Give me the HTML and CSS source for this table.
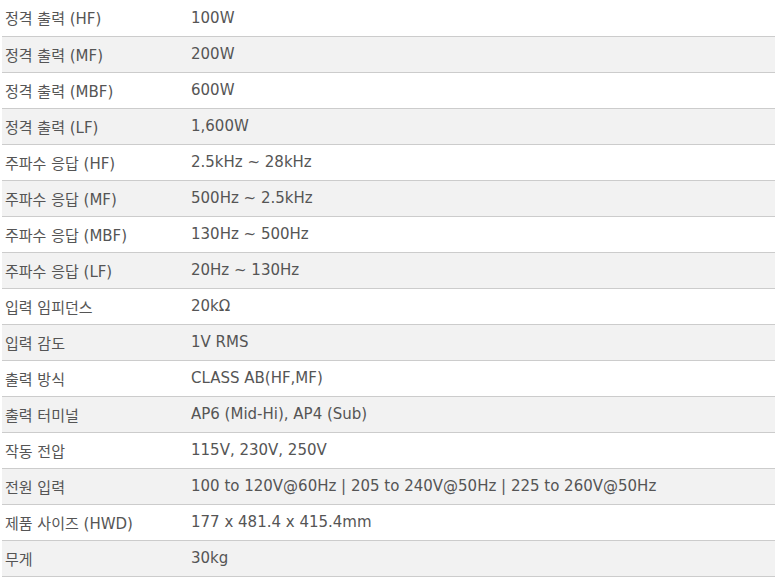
FILE: index.html
```html
<!DOCTYPE html>
<html lang="ko">
<head>
<meta charset="utf-8">
<link rel="stylesheet" href="styles.css">
</head>
<body>
<table class="spec">
<tbody>
<tr><th>정격 출력 (HF)</th><td>100W</td></tr>
<tr><th>정격 출력 (MF)</th><td>200W</td></tr>
<tr><th>정격 출력 (MBF)</th><td>600W</td></tr>
<tr><th>정격 출력 (LF)</th><td>1,600W</td></tr>
<tr><th>주파수 응답 (HF)</th><td>2.5kHz ~ 28kHz</td></tr>
<tr><th>주파수 응답 (MF)</th><td>500Hz ~ 2.5kHz</td></tr>
<tr><th>주파수 응답 (MBF)</th><td>130Hz ~ 500Hz</td></tr>
<tr><th>주파수 응답 (LF)</th><td>20Hz ~ 130Hz</td></tr>
<tr><th>입력 임피던스</th><td>20kΩ</td></tr>
<tr><th>입력 감도</th><td>1V RMS</td></tr>
<tr><th>출력 방식</th><td>CLASS AB(HF,MF)</td></tr>
<tr><th>출력 터미널</th><td>AP6 (Mid-Hi), AP4 (Sub)</td></tr>
<tr><th>작동 전압</th><td>115V, 230V, 250V</td></tr>
<tr><th>전원 입력</th><td>100 to 120V@60Hz | 205 to 240V@50Hz | 225 to 260V@50Hz</td></tr>
<tr><th>제품 사이즈 (HWD)</th><td>177 x 481.4 x 415.4mm</td></tr>
<tr><th>무게</th><td>30kg</td></tr>
</tbody>
</table>
</body>
</html>
```
FILE: styles.css
```css
html, body {
  margin: 0;
  padding: 0;
  background: #ffffff;
}
body {
  padding-left: 2px;
  font-family: "DejaVu Sans", "Noto Sans CJK KR", sans-serif;
  font-size: 15px;
  color: #555555;
}
.spec {
  width: 773px;
  border-collapse: collapse;
  border-spacing: 0;
}
.spec tr {
  height: 36px;
  border-bottom: 1px solid #cccccc;
}
.spec tr:nth-child(even) {
  background: #f2f2f2;
}
.spec th,
.spec td {
  padding: 0 0 0 3px;
  text-align: left;
  font-weight: normal;
  vertical-align: middle;
  white-space: nowrap;
}
.spec th {
  width: 183px;
}
```
